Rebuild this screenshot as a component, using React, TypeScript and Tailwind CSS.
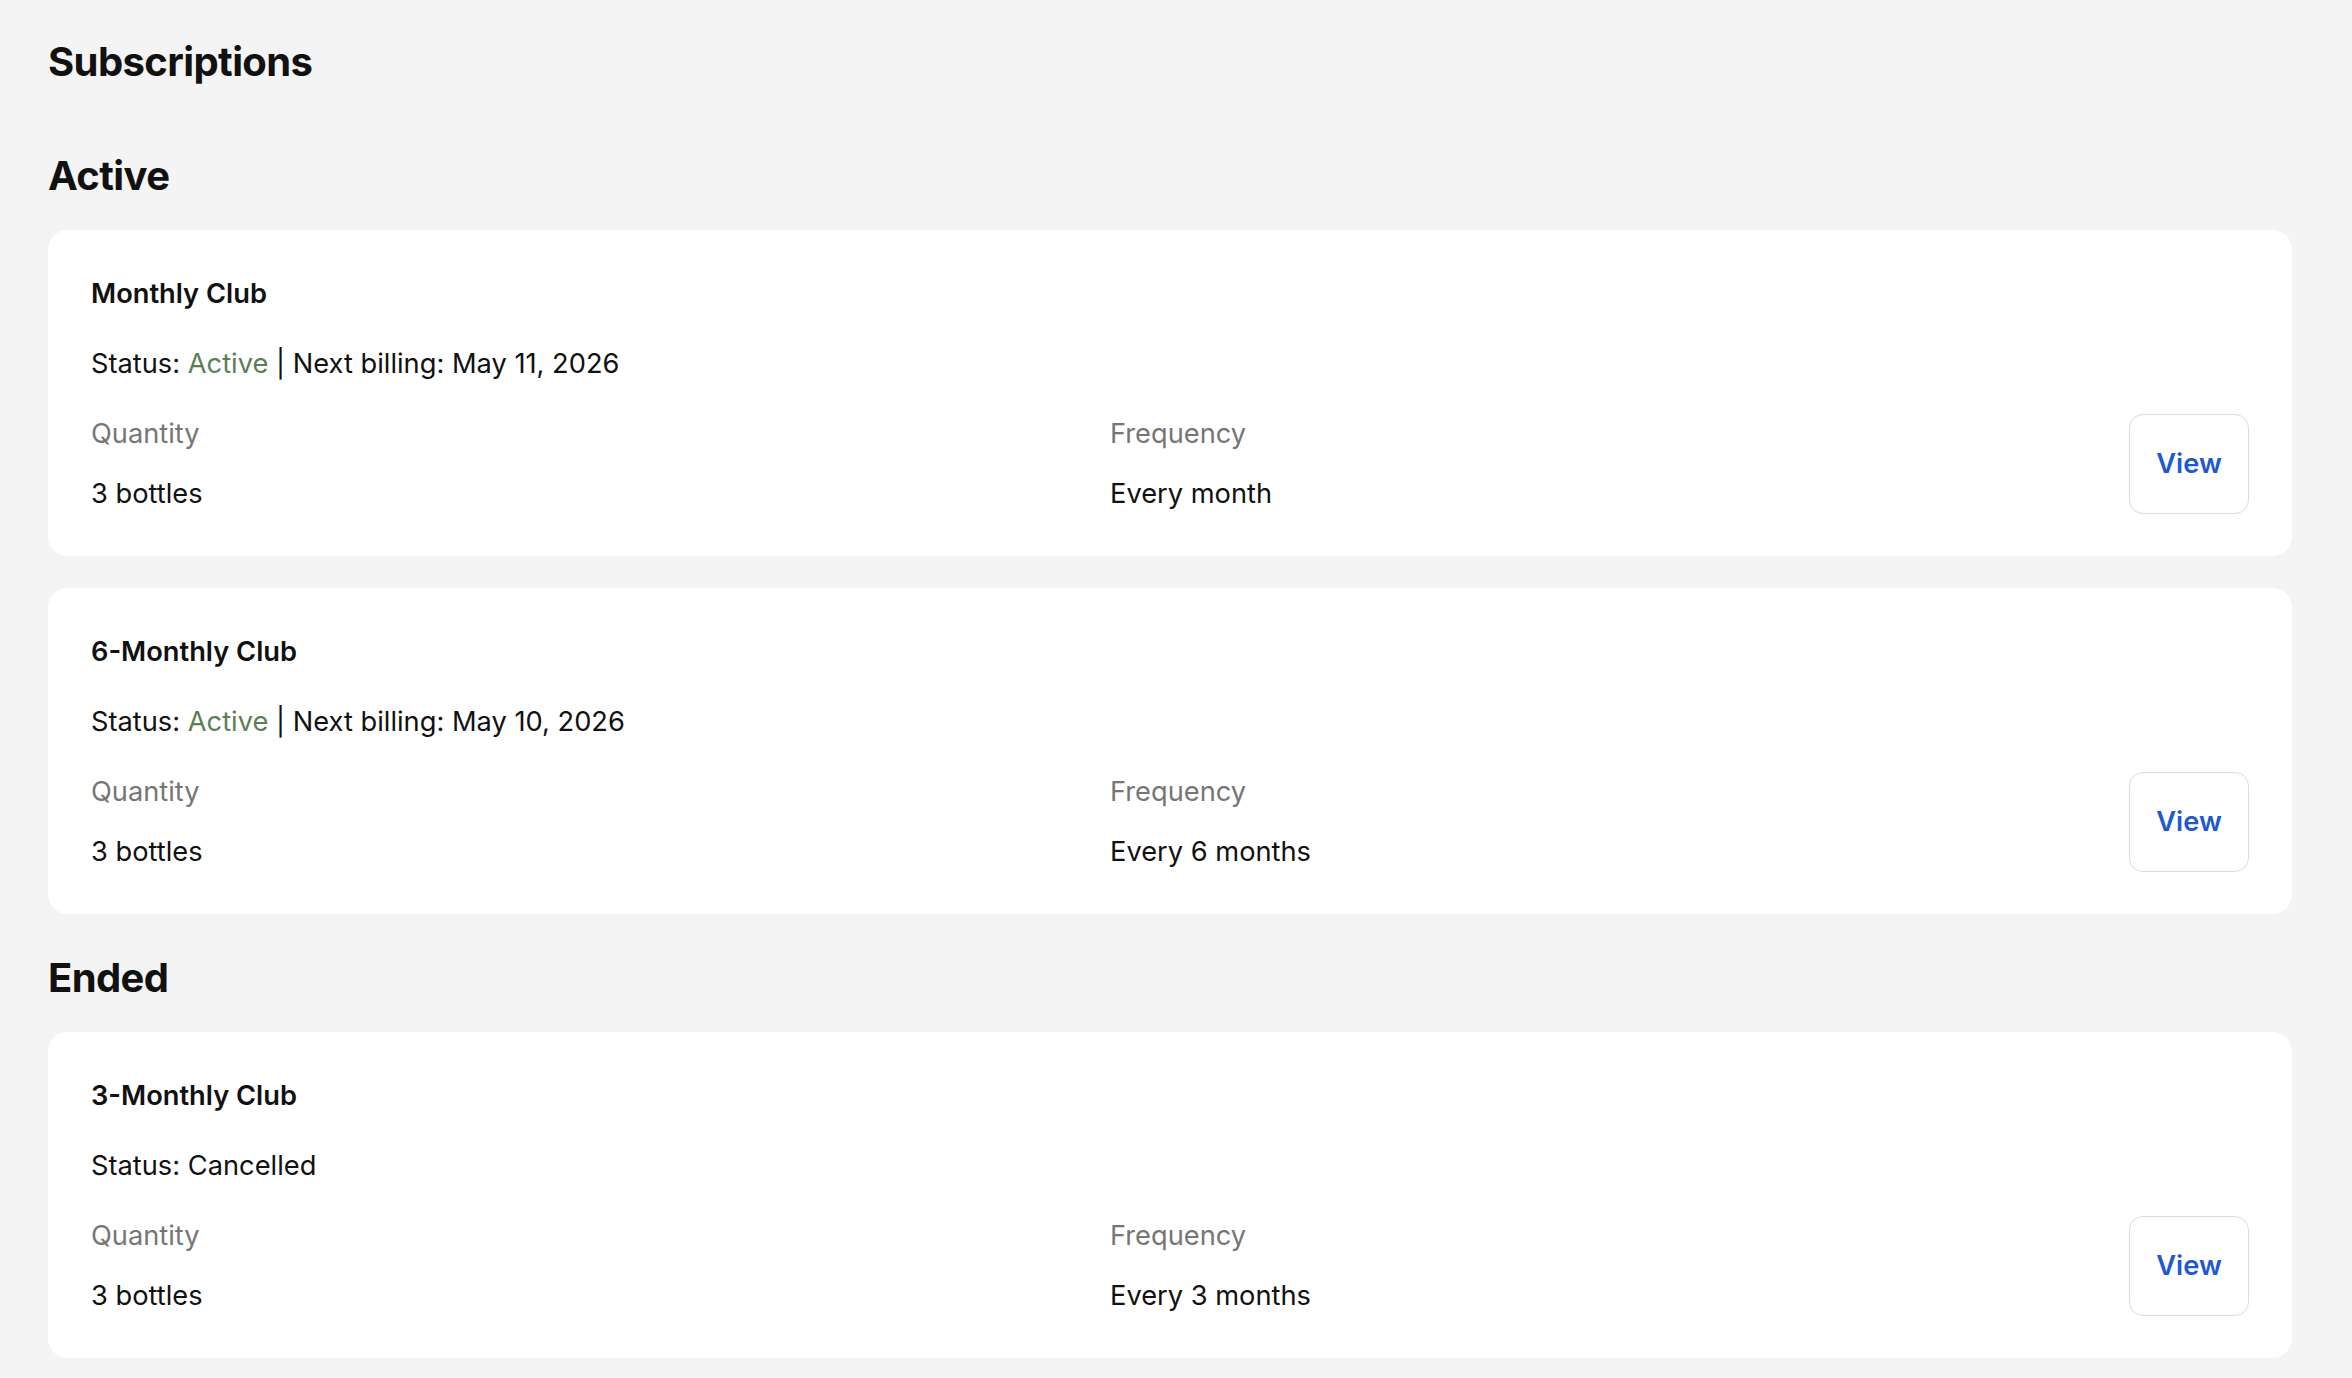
import React from 'react';

type Sub = {
  id: string;
  name: string;
  status: 'Active' | 'Cancelled';
  nextBilling?: string;
  quantity: string;
  frequency: string;
};

const active: Sub[] = [
  { id: 'm1', name: 'Monthly Club', status: 'Active', nextBilling: 'May 11, 2026', quantity: '3 bottles', frequency: 'Every month' },
  { id: 'm6', name: '6-Monthly Club', status: 'Active', nextBilling: 'May 10, 2026', quantity: '3 bottles', frequency: 'Every 6 months' },
];

const ended: Sub[] = [
  { id: 'm3', name: '3-Monthly Club', status: 'Cancelled', quantity: '3 bottles', frequency: 'Every 3 months' },
];

const SubscriptionCard: React.FC<{ sub: Sub }> = ({ sub }) => (
  <div className="bg-white rounded-[20px] px-[43px] pt-[44px] pb-[42px]">
    <h3 className="text-[27.25px] leading-[40px] font-semibold text-[#111]">{sub.name}</h3>
    <p className="mt-[30px] text-[27.25px] leading-[40px] text-[#111]">
      Status:{' '}
      {sub.status === 'Active' ? <span className="text-[#5b7f55]">Active</span> : 'Cancelled'}
      {sub.nextBilling && <> | Next billing: {sub.nextBilling}</>}
    </p>
    <div className="mt-[30px] flex items-center gap-6">
      <div className="flex-1">
        <div className="text-[27.25px] leading-[40px] text-[#767676]">Quantity</div>
        <div className="mt-[20px] text-[27.25px] leading-[40px] text-[#111]">{sub.quantity}</div>
      </div>
      <div className="flex-1">
        <div className="text-[27.25px] leading-[40px] text-[#767676]">Frequency</div>
        <div className="mt-[20px] text-[27.25px] leading-[40px] text-[#111]">{sub.frequency}</div>
      </div>
      <button className="w-[120px] h-[100px] rounded-[14px] border-[1.5px] border-[#dcdcdc] bg-white text-[27.25px] font-semibold text-[#2157cf]">
        View
      </button>
    </div>
  </div>
);

export default function App() {
  return (
    <div
      className="min-h-screen bg-[#f4f4f4] pl-[48px] pr-[60px] pt-[38px] pb-[40px] text-[#111]"
      style={{ fontFamily: 'Inter, "Noto Sans", sans-serif' }}
    >
      <h1 className="text-[40px] leading-[48px] font-bold tracking-[-0.015em]">Subscriptions</h1>

      {/* Active */}
      <section className="mt-[66px]">
        <h2 className="text-[40px] leading-[48px] font-bold tracking-[-0.015em]">Active</h2>
        <div className="mt-[30px] flex flex-col gap-[32px]">
          {active.map((s) => (
            <SubscriptionCard key={s.id} sub={s} />
          ))}
        </div>
      </section>

      {/* Ended */}
      <section className="mt-[40px]">
        <h2 className="text-[40px] leading-[48px] font-bold tracking-[-0.015em]">Ended</h2>
        <div className="mt-[30px] flex flex-col gap-[32px]">
          {ended.map((s) => (
            <SubscriptionCard key={s.id} sub={s} />
          ))}
        </div>
      </section>
    </div>
  );
}
